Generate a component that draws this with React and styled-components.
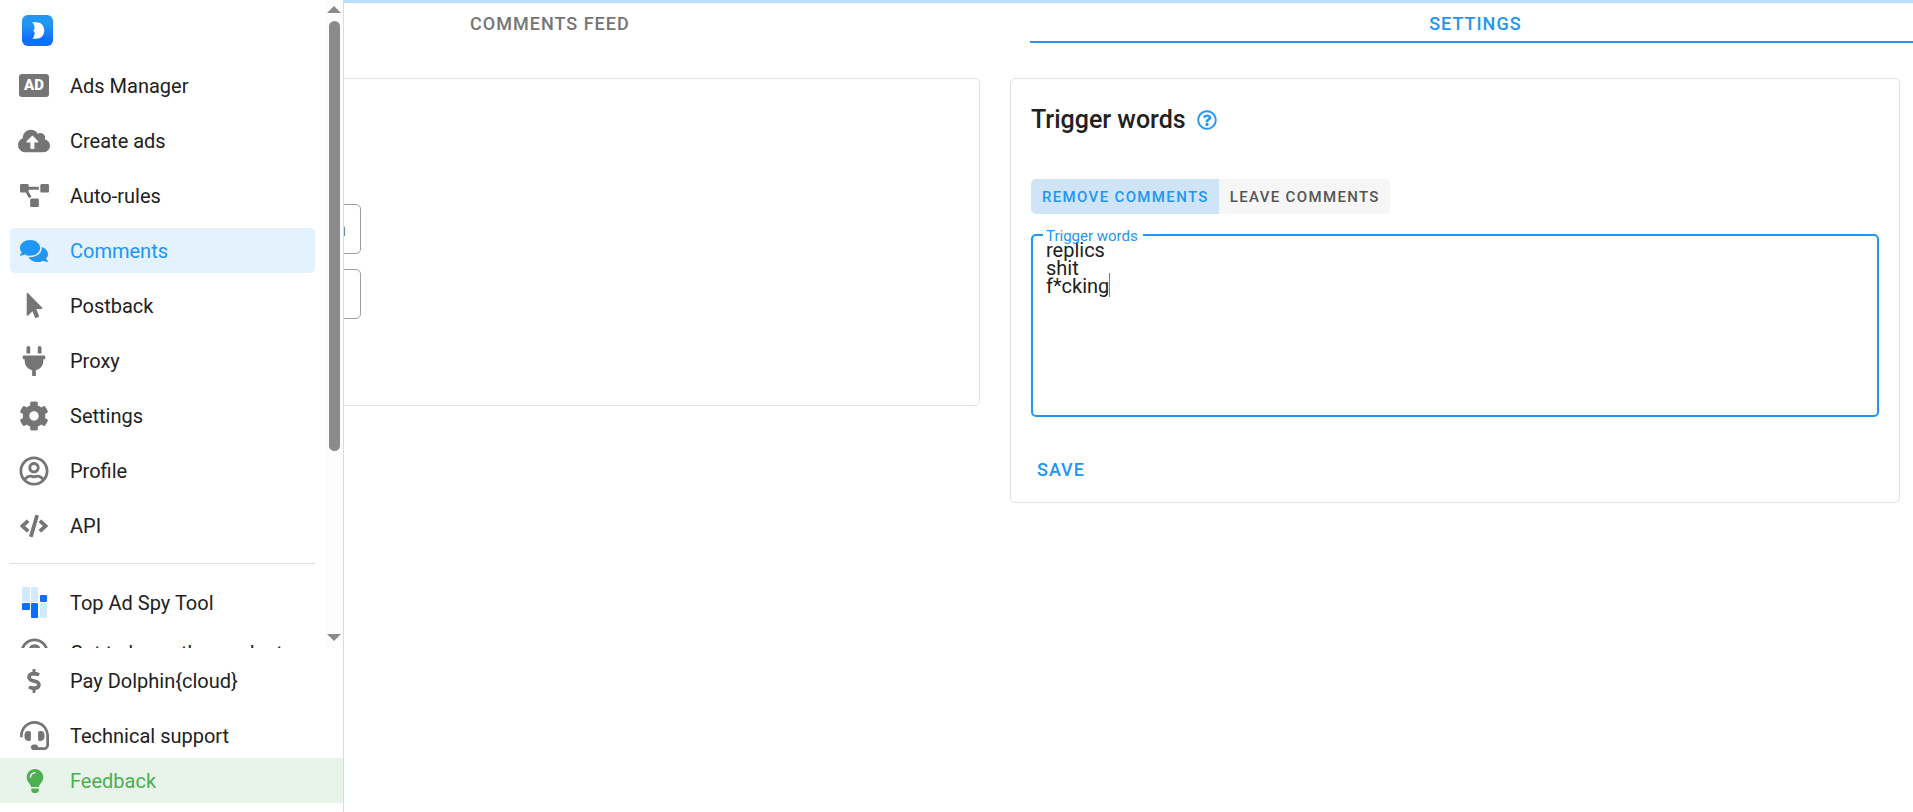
import { useState } from 'react';
import styled, { createGlobalStyle } from 'styled-components';
import {
  FaCloudUploadAlt,
  FaCode,
  FaCog,
  FaComments,
  FaDollarSign,
  FaHeadset,
  FaLightbulb,
  FaMousePointer,
  FaPlug,
  FaProjectDiagram,
  FaRegQuestionCircle,
  FaRegUserCircle,
} from 'react-icons/fa';

function MenuItem({ title, icon, active }) {
  return (
    <Item>
      <ItemLink href="#" $active={active}>
        <ItemIcon>{icon}</ItemIcon>
        {title}
      </ItemLink>
    </Item>
  );
}

function Sidebar() {
  const menu = [
    { title: 'Ads Manager', icon: <AdBadge aria-hidden="true">AD</AdBadge> },
    { title: 'Create ads', icon: <FaCloudUploadAlt size={32} /> },
    { title: 'Auto-rules', icon: <FaProjectDiagram size={29} /> },
    { title: 'Comments', icon: <FaComments size={28} />, active: true },
    { title: 'Postback', icon: <FaMousePointer size={25} /> },
    { title: 'Proxy', icon: <FaPlug size={30} /> },
    { title: 'Settings', icon: <FaCog size={30} /> },
    { title: 'Profile', icon: <FaRegUserCircle size={30} /> },
    { title: 'API', icon: <FaCode size={28} /> },
  ];

  return (
    <SidebarWrapper>
      <ScrollArea>
        <MenuColumn>
          <LogoLink href="#" aria-label="Dolphin">
            <Logo />
          </LogoLink>
          <MenuList>
            {menu.map((item) => (
              <MenuItem key={item.title} {...item} />
            ))}
          </MenuList>
          <Divider />
          <MenuList $dense>
            <MenuItem title="Top Ad Spy Tool" icon={<SpyIcon />} />
            <MenuItem
              title="Get to know the product"
              icon={<FaRegQuestionCircle size={29} />}
            />
          </MenuList>
        </MenuColumn>
        <ScrollTrack>
          <ScrollArrow />
          <ScrollRail>
            <ScrollThumb />
          </ScrollRail>
          <ScrollArrow $down />
        </ScrollTrack>
      </ScrollArea>
      <BottomList>
        <MenuItem title="Pay Dolphin{cloud}" icon={<FaDollarSign size={24} />} />
        <MenuItem title="Technical support" icon={<FaHeadset size={29} />} />
      </BottomList>
      <FeedbackLink href="#">
        <ItemIcon>
          <FaLightbulb size={24} />
        </ItemIcon>
        Feedback
      </FeedbackLink>
    </SidebarWrapper>
  );
}

function Logo() {
  return (
    <svg width="31" height="31" viewBox="0 0 32 32" aria-hidden="true">
      <defs>
        <linearGradient id="logo" x1="0" y1="0" x2="0" y2="1">
          <stop offset="0.3" stopColor="#2196f3" />
          <stop offset="0.8" stopColor="#0d6efd" />
        </linearGradient>
      </defs>
      <rect width="32" height="32" rx="6" fill="url(#logo)" />
      <path
        d="M10.500 7.500h4c5 0 8.500 3.500 8.500 8.500s-3.500 8.500-8.500 8.500h-4c1.500-1.500 2.500-3.500 2.500-6c0-1-.5-1.500-1.500-2.500c1-1 1.500-1.500 1.500-2.500c0-2.500-1-4.500-2.500-6z"
        fill="#fff"
      />
    </svg>
  );
}

function SpyIcon() {
  return (
    <svg width="25" height="31" viewBox="0 0 25 31" aria-hidden="true">
      <g fill="#d3e9fd">
        <rect x="0" y="0" width="8" height="15" rx="1" />
        <rect x="9" y="0" width="7" height="15" rx="1" />
        <rect x="18" y="16" width="7" height="15" rx="1" />
      </g>
      <g fill="#0d6efd">
        <rect x="0" y="16" width="8" height="7" rx="1" />
        <rect x="9" y="16" width="7" height="15" rx="1" />
        <rect x="18" y="8" width="7" height="7" rx="1" />
      </g>
    </svg>
  );
}

function TriggerWords() {
  const [mode, setMode] = useState('remove');
  const [words, setWords] = useState('replics\nshit\nf*cking');

  return (
    <Card>
      <CardTitle>
        Trigger words
        <FaRegQuestionCircle size={20} color="#2196f3" />
      </CardTitle>
      <ToggleGroup>
        <Toggle
          type="button"
          $active={mode === 'remove'}
          onClick={() => setMode('remove')}
        >
          Remove comments
        </Toggle>
        <Toggle
          type="button"
          $active={mode === 'leave'}
          onClick={() => setMode('leave')}
        >
          Leave comments
        </Toggle>
      </ToggleGroup>
      <Field>
        <FieldLabel htmlFor="trigger-words">Trigger words</FieldLabel>
        <TextArea
          id="trigger-words"
          spellCheck={false}
          value={words}
          onChange={(e) => setWords(e.target.value)}
        />
        <Caret />
      </Field>
      <SaveButton type="button">Save</SaveButton>
    </Card>
  );
}

function App() {
  return (
    <>
      <GlobalStyle />
      <Sidebar />
      <Progress />
      <Page>
        <Tabs>
          <Tab type="button">Comments feed</Tab>
          <Tab type="button" $active>
            Settings
          </Tab>
        </Tabs>
        <Cards>
          <FilterCard>
            <FilterInput type="text" aria-label="Action" defaultValue="n" />
            <FilterInput type="text" aria-label="Account" />
          </FilterCard>
          <TriggerWords />
        </Cards>
      </Page>
    </>
  );
}

const GlobalStyle = createGlobalStyle`
  * {
    box-sizing: border-box;
  }

  body {
    margin: 0;
    overflow-x: hidden;
    background: #fff;
    color: #212121;
    font-family: Roboto, sans-serif;
    font-size: 20px;
  }

  button,
  input,
  textarea {
    font-family: inherit;
  }
`;

const SidebarWrapper = styled.aside`
  position: fixed;
  top: 0;
  bottom: 0;
  left: 0;
  z-index: 2;
  display: flex;
  flex-direction: column;
  width: 344px;
  padding-bottom: 9px;
  border-right: 1px solid #dcdcdc;
  background: #fff;
`;

const ScrollArea = styled.div`
  display: flex;
  flex: 1;
  min-height: 0;
  overflow: hidden;
`;

const MenuColumn = styled.nav`
  flex: 1;
  padding: 15px 10px 0;
`;

const LogoLink = styled.a`
  display: block;
  height: 32px;
  margin: 0 12px 16px;
`;

const MenuList = styled.ul`
  display: flex;
  flex-direction: column;
  gap: ${({ $dense }) => ($dense ? '5px' : '10px')};
  margin: 0;
  padding: 0;
  list-style: none;
`;

const BottomList = styled(MenuList)`
  padding: 10px 10px 0;
`;

const Item = styled.li`
  height: 45px;
`;

const ItemLink = styled.a`
  display: flex;
  align-items: center;
  gap: 18px;
  height: 45px;
  padding-left: 6px;
  border-radius: 5px;
  background: ${({ $active }) => ($active ? '#e3f2fd' : 'transparent')};
  color: ${({ $active }) => ($active ? '#2196f3' : '#212121')};
  text-decoration: none;
  white-space: nowrap;

  svg {
    color: ${({ $active }) => ($active ? '#2196f3' : '#757575')};
  }
`;

const ItemIcon = styled.span`
  display: flex;
  flex: none;
  justify-content: center;
  width: 36px;
`;

const AdBadge = styled.span`
  width: 30px;
  height: 23px;
  border-radius: 3px;
  background: #757575;
  color: #fff;
  font-size: 15px;
  font-weight: 900;
  line-height: 23px;
  text-align: center;
`;

const FeedbackLink = styled.a`
  display: flex;
  align-items: center;
  gap: 17px;
  height: 45px;
  padding-left: 17px;
  background: #e8f3e9;
  color: #4caf50;
  text-decoration: none;
`;

const Divider = styled.hr`
  height: 1px;
  margin: 15px 0 16px;
  border: 0;
  background: #e0e0e0;
`;

const ScrollTrack = styled.div`
  display: flex;
  flex-direction: column;
  align-items: center;
  width: 18px;
  padding: 6px 0 7px;
  background: #fcfcfc;
`;

const ScrollArrow = styled.span`
  border: 7px solid transparent;
  border-top: ${({ $down }) => ($down ? '7px solid #8b8b8b' : '0')};
  border-bottom: ${({ $down }) => ($down ? '0' : '7px solid #8b8b8b')};
`;

const ScrollRail = styled.div`
  flex: 1;
  width: 11px;
  margin: 8px 0;
`;

const ScrollThumb = styled.div`
  height: 71%;
  border-radius: 6px;
  background: #8b8b8b;
`;

const Progress = styled.div`
  height: 3px;
  background: #bbdefb;
`;

const Page = styled.main`
  padding-left: 70px;
`;

const Tabs = styled.div`
  display: grid;
  grid-template-columns: 14fr 13fr;
  margin-right: -8px;
`;

const Tab = styled.button`
  height: 40px;
  padding: 2px 0 0;
  border: 0;
  border-bottom: 2px solid ${({ $active }) => ($active ? '#2196f3' : 'transparent')};
  background: none;
  color: ${({ $active }) => ($active ? '#2196f3' : '#757575')};
  font-size: 18px;
  font-weight: 500;
  letter-spacing: 1px;
  text-transform: uppercase;
`;

const Cards = styled.div`
  display: grid;
  grid-template-columns: 1fr 1fr;
  align-items: start;
  gap: 30px;
  padding: 35px 13px 0 20px;
`;

const Card = styled.section`
  padding: 20px 20px 10px;
  border: 1px solid #e0e0e0;
  border-radius: 5px;
`;

const FilterCard = styled(Card)`
  display: flex;
  flex-direction: column;
  gap: 15px;
  padding: 125px 20px 86px;
`;

const FilterInput = styled.input`
  width: 250px;
  height: 50px;
  padding: 0 14px;
  border: 1px solid #9e9e9e;
  border-radius: 5px;
  color: #616161;
  font-size: 20px;
  text-align: right;
`;

const CardTitle = styled.h2`
  display: flex;
  align-items: center;
  gap: 11px;
  margin: 0;
  font-size: 25px;
  font-weight: 500;
  line-height: 42px;
`;

const ToggleGroup = styled.div`
  display: flex;
  margin-top: 38px;
  width: fit-content;
  overflow: hidden;
  border-radius: 5px;
`;

const Toggle = styled.button`
  height: 35px;
  padding: 0 10px 0 11px;
  border: 0;
  background: ${({ $active }) => ($active ? '#cfe4f7' : '#f6f6f6')};
  color: ${({ $active }) => ($active ? '#2196f3' : '#555')};
  font-size: 15px;
  font-weight: 500;
  letter-spacing: 0.09em;
  text-transform: uppercase;
`;

const Field = styled.div`
  position: relative;
  margin-top: 20px;
`;

const FieldLabel = styled.label`
  position: absolute;
  top: -8px;
  left: 12px;
  padding: 0 5px 0 3px;
  background: linear-gradient(#fff 12px, transparent 12px);
  color: #2196f3;
  font-size: 15px;
  line-height: 20px;
`;

const TextArea = styled.textarea`
  display: block;
  width: 100%;
  height: 183px;
  padding: 5px 13px;
  border: 2px solid #2196f3;
  border-radius: 5px;
  outline: 0;
  background: #fff;
  color: #212121;
  font-size: 20px;
  line-height: 18px;
  resize: none;
`;

const Caret = styled.span`
  position: absolute;
  top: 39px;
  left: 78px;
  width: 1px;
  height: 24px;
  background: #2196f3;
`;

const SaveButton = styled.button`
  display: block;
  height: 45px;
  margin-top: 30px;
  padding: 0 6px;
  border: 0;
  background: none;
  color: #2196f3;
  font-size: 18px;
  font-weight: 500;
  letter-spacing: 1px;
  text-transform: uppercase;
`;

export default App;
